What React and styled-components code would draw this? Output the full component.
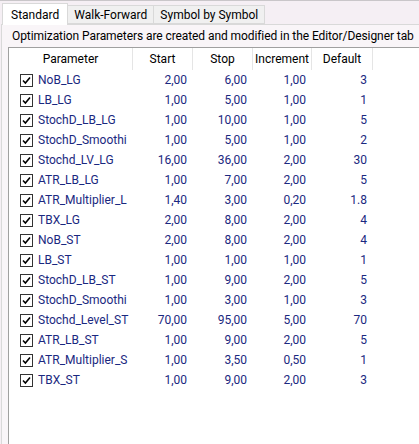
import styled, { createGlobalStyle } from "styled-components";

const GlobalStyle = createGlobalStyle`
  html, body {
    margin: 0;
    padding: 0;
    background: #ffffff;
  }
  body {
    font-family: Roboto, "Noto Sans", sans-serif;
    font-size: 12px;
  }
`;

const Window = styled.div`
  width: 419px;
  height: 444px;
  overflow: hidden;
  background: #f5eff4;
  border-top: 1px solid #c9c6c9;
  box-sizing: border-box;
  display: flex;
  flex-direction: column;
`;

const TabStrip = styled.div`
  display: flex;
  align-items: flex-end;
  height: 23px;
  padding-left: 2px;
`;

const Tab = styled.div`
  height: ${(p) => (p.$active ? "22px" : "19px")};
  padding: 0 ${(p) => (p.$active ? "8px" : "6px")};
  margin-bottom: ${(p) => (p.$active ? "-1px" : "0")};
  background: ${(p) => (p.$active ? "#ffffff" : "#f0f0f0")};
  border: 1px solid #d9d9d9;
  border-bottom: ${(p) => (p.$active ? "none" : "1px solid #d9d9d9")};
  border-left: ${(p) => (p.$first ? "1px solid #d9d9d9" : "none")};
  display: flex;
  align-items: center;
  color: #000;
  white-space: nowrap;
  position: relative;
  z-index: ${(p) => (p.$active ? 1 : 0)};
  box-sizing: border-box;
`;

const Page = styled.div`
  flex: 1;
  border-top: 1px solid #d9d9d9;
  border-left: 1px solid #d9d9d9;
  margin-left: 1px;
  background: #f9f5f8;
  display: flex;
  flex-direction: column;
  min-height: 0;
`;

const Caption = styled.div`
  height: 22px;
  display: flex;
  align-items: center;
  padding-left: 10px;
  letter-spacing: -0.08px;
  color: #000;
  white-space: nowrap;
`;

const List = styled.div`
  flex: 1;
  margin-left: 6px;
  border-left: 1px solid #a0a0a0;
  border-top: 1px solid #a0a0a0;
  background: #ffffff;
`;

const Row = styled.div`
  display: grid;
  grid-template-columns: 124px 60px 60px 59px 61px 1fr;
  height: ${(p) => (p.$head ? "22px" : "20px")};
`;

const HeadCell = styled.div`
  display: flex;
  align-items: center;
  justify-content: center;
  border-right: ${(p) => (p.$last ? "none" : "1px solid #e5e5e5")};
  color: #000;
  white-space: nowrap;
`;

const NameCell = styled.div`
  display: flex;
  align-items: center;
  padding-left: 11px;
  gap: 5px;
  overflow: hidden;
  white-space: nowrap;
  color: #1a2880;
`;

const NumCell = styled.div`
  display: flex;
  align-items: center;
  justify-content: flex-end;
  padding-right: 6px;
  color: #1a2880;
`;

const Box = styled.span`
  flex: none;
  width: 13px;
  height: 13px;
  box-sizing: border-box;
  border: 1px solid #333333;
  background: #fff;
  display: flex;
  align-items: center;
  justify-content: center;
`;

const Check = () => (
  <Box>
    <svg width="9" height="9" viewBox="0 0 9 9">
      <path d="M1 4.5 L3.4 7 L8 1.5" fill="none" stroke="#000" strokeWidth="1.6" />
    </svg>
  </Box>
);

const params = [
  ["NoB_LG", "2,00", "6,00", "1,00", "3"],
  ["LB_LG", "1,00", "5,00", "1,00", "1"],
  ["StochD_LB_LG", "1,00", "10,00", "1,00", "5"],
  ["StochD_Smoothi", "1,00", "5,00", "1,00", "2"],
  ["Stochd_LV_LG", "16,00", "36,00", "2,00", "30"],
  ["ATR_LB_LG", "1,00", "7,00", "2,00", "5"],
  ["ATR_Multiplier_L", "1,40", "3,00", "0,20", "1.8"],
  ["TBX_LG", "2,00", "8,00", "2,00", "4"],
  ["NoB_ST", "2,00", "8,00", "2,00", "4"],
  ["LB_ST", "1,00", "1,00", "1,00", "1"],
  ["StochD_LB_ST", "1,00", "9,00", "2,00", "5"],
  ["StochD_Smoothi", "1,00", "3,00", "1,00", "3"],
  ["Stochd_Level_ST", "70,00", "95,00", "5,00", "70"],
  ["ATR_LB_ST", "1,00", "9,00", "2,00", "5"],
  ["ATR_Multiplier_S", "1,00", "3,50", "0,50", "1"],
  ["TBX_ST", "1,00", "9,00", "2,00", "3"],
];

export default function App() {
  return (
    <>
      <GlobalStyle />
      <Window>
        <TabStrip>
          <Tab $active $first>Standard</Tab>
          <Tab>Walk-Forward</Tab>
          <Tab>Symbol by Symbol</Tab>
        </TabStrip>
        <Page>
          <Caption>
            Optimization Parameters are created and modified in the Editor/Designer tab
          </Caption>
          <List>
            <Row $head>
              <HeadCell>Parameter</HeadCell>
              <HeadCell>Start</HeadCell>
              <HeadCell>Stop</HeadCell>
              <HeadCell>Increment</HeadCell>
              <HeadCell>Default</HeadCell>
              <HeadCell $last />
            </Row>
            {params.map(([name, start, stop, inc, def], i) => (
              <Row key={i}>
                <NameCell>
                  <Check />
                  {name}
                </NameCell>
                <NumCell>{start}</NumCell>
                <NumCell>{stop}</NumCell>
                <NumCell>{inc}</NumCell>
                <NumCell>{def}</NumCell>
                <div />
              </Row>
            ))}
          </List>
        </Page>
      </Window>
    </>
  );
}
